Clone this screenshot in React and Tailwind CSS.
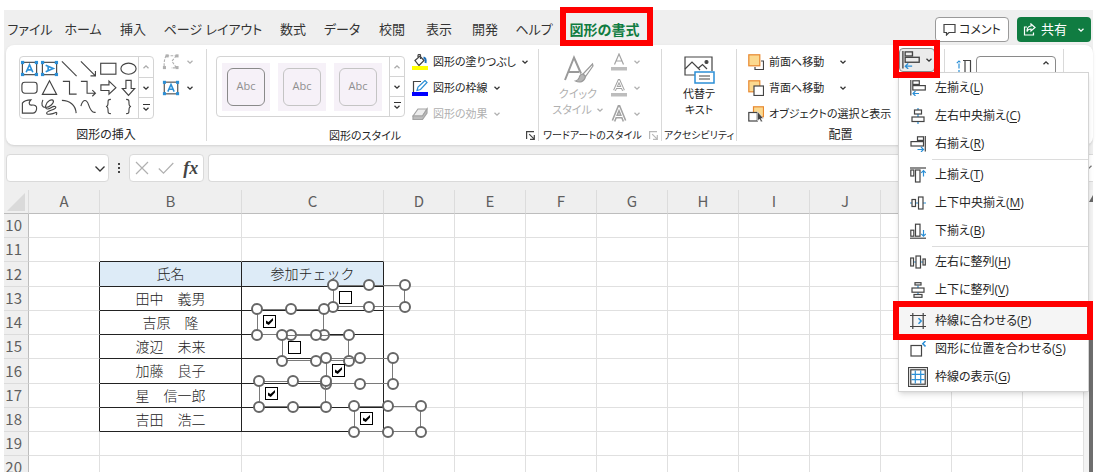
import { useState } from "react";

const FONT =
  "font-['Open_Sans','Noto_Sans_CJK_JP',sans-serif] [font-feature-settings:'palt']";
const SHEET_FONT = "font-['Noto_Sans_CJK_JP',sans-serif] [font-feature-settings:normal]";

const TABS = [
  { label: "ファイル", width: "w-[52px]" },
  { label: "ホーム", width: "w-[54px]" },
  { label: "挿入", width: "w-[46px]" },
  { label: "ページ レイアウト", width: "w-[114px]" },
  { label: "数式", width: "w-[46px]" },
  { label: "データ", width: "w-[52px]" },
  { label: "校閲", width: "w-[48px]" },
  { label: "表示", width: "w-[46px]" },
  { label: "開発", width: "w-[46px]" },
  { label: "ヘルプ", width: "w-[52px]" },
];

// columns past J sit under the open menu and carry no letter
const COLUMNS = ["A", "B", "C", "D", "E", "F", "G", "H", "I", "J", "", "", ""];

const ROWS = [
  { n: 10 },
  { n: 11 },
  { n: 12, name: "氏名", check: "参加チェック", head: true },
  { n: 13, name: "田中　義男" },
  { n: 14, name: "吉原　隆" },
  { n: 15, name: "渡辺　未来" },
  { n: 16, name: "加藤　良子" },
  { n: 17, name: "星　信一郎" },
  { n: 18, name: "吉田　浩二" },
  { n: 19 },
  { n: 20 },
];

// form controls float over the cells, positions are relative to the sheet
const CONTROLS = [
  { id: "tanaka", label: "田中 義男", place: "left-[329px] top-[95px] w-[72px] h-[22px]", checked: false },
  { id: "yoshihara", label: "吉原 隆", place: "left-[253px] top-[119px] w-[67px] h-[26px]", checked: true },
  { id: "watanabe", label: "渡辺 未来", place: "left-[278px] top-[145px] w-[67px] h-[26px]", checked: false },
  { id: "kato", label: "加藤 良子", place: "left-[322px] top-[168px] w-[67px] h-[26px]", checked: true },
  { id: "hoshi", label: "星 信一郎", place: "left-[255px] top-[191px] w-[67px] h-[26px]", checked: true },
  { id: "yoshida", label: "吉田 浩二", place: "left-[350px] top-[216px] w-[67px] h-[26px]", checked: true },
];

const HANDLES = [
  "-left-[7px] -top-[7px]",
  "left-1/2 -ml-[6px] -top-[7px]",
  "-right-[7px] -top-[7px]",
  "-left-[7px] -bottom-[7px]",
  "left-1/2 -ml-[6px] -bottom-[7px]",
  "-right-[7px] -bottom-[7px]",
];

const INK = "#444444";
const BLUE = "#2b8fd6";

function Icon({ children, className = "w-4 h-4", box = "0 0 16 16", stroke = INK }) {
  return (
    <svg
      viewBox={box}
      className={`${className} flex-shrink-0`}
      fill="none"
      stroke={stroke}
      strokeWidth="1.2"
      aria-hidden="true"
    >
      {children}
    </svg>
  );
}

function Chevron({ className = "text-[#333]", up = false }) {
  return (
    <svg viewBox="0 0 8 8" className={`w-2 h-2 flex-shrink-0 ${className}`} fill="none" stroke="currentColor" strokeWidth="1.3" aria-hidden="true">
      <path d={up ? "M1.5 5.2 4 2.8l2.5 2.4" : "M1.5 2.8 4 5.2l2.5-2.4"} />
    </svg>
  );
}

function TextBoxGlyph({ turned = false }) {
  return (
    <g>
      <rect x="2.5" y="3.5" width="15" height="13" stroke={INK} />
      <g fill={BLUE} stroke="none">
        <rect x="1" y="2" width="3.4" height="3.4" />
        <rect x="15.6" y="2" width="3.4" height="3.4" />
        <rect x="1" y="14.6" width="3.4" height="3.4" />
        <rect x="15.6" y="14.6" width="3.4" height="3.4" />
      </g>
      <path
        d="M6.5 14 10 6l3.5 8M7.8 11.4h4.4"
        stroke={BLUE}
        strokeWidth="1.7"
        transform={turned ? "rotate(90 10 10)" : undefined}
      />
    </g>
  );
}

const SHAPES = [
  { name: "テキスト ボックス", art: <TextBoxGlyph /> },
  { name: "縦書きテキスト ボックス", art: <TextBoxGlyph turned /> },
  { name: "直線", art: <path d="M2 2.5 17.5 18" /> },
  { name: "矢印", art: <path d="M2 2.5 17 17.5M17.3 12.5v5.2h-5.2" /> },
  { name: "正方形", art: <rect x="1.8" y="4.5" width="16" height="11.5" /> },
  { name: "楕円", art: <ellipse cx="10" cy="10.2" rx="8" ry="5.8" /> },
  { name: "角丸四角形", art: <rect x="2" y="4.5" width="16" height="11.5" rx="3" /> },
  { name: "三角形", art: <path d="M10 3 17.5 17.3h-15z" /> },
  { name: "コネクタ", art: <path d="M3 3.5h7v13.5h7.5" /> },
  { name: "矢印コネクタ", art: <path d="M2 3.5h6.5V16H17M14 12.8l3.3 3.2-3.3 3.2" /> },
  { name: "右矢印", art: <path d="M2 7.3h8.500V3.300L17.800 10.200 10.500 17v-3.800H2z" /> },
  { name: "下矢印", art: <path d="M7.300 2.500h5.500v8.500h3.700L10 18.300 3.500 11h3.800z" /> },
  { name: "フリーフォーム", art: <path d="M2.500 6.500c2-3 5-3.500 9-3.500-3 3-2 6 1 5.500s5.500 1 5 4-2 4.500-4 4.500h-11z" /> },
  { name: "フリーハンド", art: <path d="M3 3c-2 5-1 8 3 8S15 6.500 14 4 7 4 6 9s3 4 6 2 6-1 4 1-9 2.500-9 5 7 .5 9-.5 2 1 1 2.500" /> },
  { name: "円弧", art: <path d="M2 3.500c8 0 14.500 5 15 13.500" /> },
  { name: "曲線", art: <path d="M2 9.500C4 2 8 2 10 8s4 9 7.500 8" /> },
  { name: "左中かっこ", art: <path d="M12.500 2.500c-3 0-3 1-3 3.500s0 4-2.200 4c2.200 0 2.200 1.500 2.200 4s0 3.500 3 3.500" /> },
  { name: "右中かっこ", art: <path d="M7.500 2.500c3 0 3 1 3 3.500s0 4 2.200 4c-2.200 0-2.200 1.500-2.200 4s0 3.500-3 3.500" /> },
];

function AlignLeftIcon({ className }) {
  return (
    <Icon className={className}>
      <path d="M.8 0v15.500" />
      <rect x="2.800" y=".8" width="6.500" height="3.600" />
      <rect x="2.800" y="5.600" width="12.500" height="4.400" />
      <path d="M9 13.500H3M5.500 11 3 13.500 5.500 16" stroke={BLUE} />
    </Icon>
  );
}

const MENU = [
  [
    { text: "左揃え", hot: "L", icon: <AlignLeftIcon /> },
    {
      text: "左右中央揃え",
      hot: "C",
      icon: (
        <Icon>
          <path d="M8 0v2M8 6v3M8 14v2" stroke={BLUE} />
          <rect x="4.500" y="2" width="7" height="4" />
          <rect x="2" y="9" width="12" height="4.500" />
        </Icon>
      ),
    },
    {
      text: "右揃え",
      hot: "R",
      icon: (
        <Icon>
          <path d="M15.300 0v15.500" />
          <rect x="7.500" y=".8" width="6" height="3.600" />
          <rect x="1" y="5.600" width="12.500" height="4.400" />
          <path d="M7.500 13.500h6M11 11l2.500 2.500L11 16" stroke={BLUE} />
        </Icon>
      ),
    },
  ],
  [
    {
      text: "上揃え",
      hot: "T",
      icon: (
        <Icon>
          <path d="M0 1h16" />
          <rect x=".8" y="3" width="3" height="6" />
          <rect x="5.500" y="3" width="4.500" height="12" />
          <path d="M13.500 9.500V3.500M11.200 5.800l2.300-2.300 2.300 2.300" stroke={BLUE} />
        </Icon>
      ),
    },
    {
      text: "上下中央揃え",
      hot: "M",
      icon: (
        <Icon>
          <path d="M0 8h2M5.500 8h3M13 8h3" stroke={BLUE} />
          <rect x="2" y="4.500" width="3.500" height="7" />
          <rect x="8.500" y="2" width="4.500" height="12" />
        </Icon>
      ),
    },
    {
      text: "下揃え",
      hot: "B",
      icon: (
        <Icon>
          <path d="M0 15.200h16" />
          <rect x=".8" y="7.200" width="3" height="6" />
          <rect x="5.500" y="1.200" width="4.500" height="12" />
          <path d="M13.500 7v6M11.200 10.800l2.300 2.300 2.300-2.300" stroke={BLUE} />
        </Icon>
      ),
    },
  ],
  [
    {
      text: "左右に整列",
      hot: "H",
      icon: (
        <Icon>
          <path d="M3.500 8h2.500M10.500 8H13" stroke={BLUE} />
          <rect x=".7" y="4" width="2.800" height="8" />
          <rect x="6" y="2" width="4.500" height="12" />
          <rect x="13" y="5" width="2.300" height="6" />
        </Icon>
      ),
    },
    {
      text: "上下に整列",
      hot: "V",
      icon: (
        <Icon>
          <path d="M8 3.500v2.500M8 10.500V12" stroke={BLUE} />
          <rect x="5" y=".7" width="6" height="2.300" />
          <rect x="2" y="6" width="12" height="4.200" />
          <rect x="4" y="12.500" width="8" height="2.800" />
        </Icon>
      ),
    },
  ],
  [
    {
      text: "枠線に合わせる",
      hot: "P",
      active: true,
      icon: (
        <Icon>
          <path d="M0 2.500h16M0 13.500h16M2.800 0v16M13.200 0v16" />
          <path d="M8.500 5.200 11.200 8l-2.700 2.800" stroke={BLUE} strokeWidth="1.500" />
        </Icon>
      ),
    },
    {
      text: "図形に位置を合わせる",
      hot: "S",
      icon: (
        <Icon>
          <rect x="1" y="4.500" width="10.500" height="10.500" />
          <path d="M15.500 0 12.800 2.700l2.700 2.700" stroke={BLUE} strokeWidth="1.500" />
        </Icon>
      ),
    },
    {
      text: "枠線の表示",
      hot: "G",
      pressed: true,
      icon: (
        <Icon>
          <rect x=".8" y=".8" width="14.400" height="14.400" fill="#fff" />
          <path d="M5.300 1.500v13M10.700 1.500v13M1.500 5.300h13M1.500 10.700h13" stroke={BLUE} />
        </Icon>
      ),
    },
  ],
];

function AlignMenu() {
  return (
    <div
      role="menu"
      className="absolute -left-px top-full z-20 w-[191px] pt-px bg-white border border-[#d4d4d4] shadow-md text-xs text-[#262626]"
    >
      {MENU.map((group, i) => (
        <div key={i}>
          {i > 0 && <div className="ml-[33px] h-[3px] py-px bg-[#dcdcdc] bg-clip-content" />}
          {group.map((item) => (
            <button
              key={item.hot}
              role="menuitem"
              className={`relative flex h-7 w-full items-center pl-[9px] whitespace-nowrap ${item.active ? "bg-[#f5f5f5]" : ""}`}
            >
              <span
                className={`flex w-5 h-5 mr-[7px] items-center justify-center border ${item.pressed ? "border-[#444] bg-[#e0e0e0]" : "border-transparent"}`}
              >
                {item.icon}
              </span>
              <span>
                {item.text}(<u className="underline-offset-2">{item.hot}</u>)
              </span>
              {item.active && (
                <span className="absolute -left-[6px] -right-[5px] -top-[6px] -bottom-[5px] border-6 border-[#ff0000] pointer-events-none" />
              )}
            </button>
          ))}
        </div>
      ))}
    </div>
  );
}

function GalleryScroll() {
  return (
    <div className="flex flex-col w-[15px] border-l border-[#d4d4d4] divide-y divide-[#d4d4d4]">
      <button aria-label="上へ" className="flex-1 flex items-center justify-center">
        <Chevron up className="text-[#aaa]" />
      </button>
      <button aria-label="下へ" className="flex-1 flex items-center justify-center">
        <Chevron />
      </button>
      <button aria-label="その他" className="flex-1 flex flex-col items-center justify-center">
        <span className="w-[7px] h-px bg-[#333]" />
        <Chevron />
      </button>
    </div>
  );
}

function RibbonGroup({ label, width, launcher, launcherTone = "#444", labelSize = "text-xs", children }) {
  return (
    <section className={`${width} flex flex-col flex-shrink-0 py-1`}>
      <div className="flex-1 flex border-r border-[#d9d9d9] flex-col">
        <div className="h-[76px] flex">{children}</div>
        <div className="flex flex-1 items-center pt-1">
          <h2 className={`flex-1 text-center leading-none whitespace-nowrap ${labelSize}`}>{label}</h2>
          {launcher && (
            <button aria-label={`${label}の設定`} className="w-[15px] flex justify-center">
              <Icon className="w-[9px] h-[9px]" box="0 0 9 9" stroke={launcherTone}>
                <path d="M.6 8V.6H8M3.200 3.200l5 5M8.300 4v4.300H4" />
              </Icon>
            </button>
          )}
        </div>
      </div>
    </section>
  );
}

function RibbonItem({ icon, text, muted, chevron = true, gap = "" }) {
  return (
    <button
      className={`flex h-[26px] items-center gap-[5px] text-[11px] whitespace-nowrap ${muted ? "text-[#b0b0b0]" : "text-[#262626]"}`}
    >
      {icon}
      {text && <span className={gap}>{text}</span>}
      {chevron && <Chevron className={muted ? "text-[#b0b0b0]" : "text-[#333]"} />}
    </button>
  );
}

function LetterIcon({ outlined, bar = true }) {
  const shape = bar ? "M4.500 11.500 9 1.500l4.500 10M6 8.500h6" : "M3.500 16 9 2.500 14.500 16M5.500 11.500h7";
  return (
    <Icon className="w-[18px] h-[18px]" box="0 0 18 18" stroke="#a3a3a3">
      {outlined ? (
        <g>
          <path d={shape} strokeWidth={bar ? "3" : "4"} />
          <path d={shape} stroke="#ffffff" strokeWidth="1" />
        </g>
      ) : (
        <path d="M4.500 11.500 9 1l4.500 10.500M6 8h6" />
      )}
      {bar && <rect x="1" y="14" width="16" height="3.500" fill="#bdbdbd" stroke="none" />}
    </Icon>
  );
}

function Ribbon() {
  return (
    <div className="ml-0.5 flex h-[100px] rounded-lg bg-white shadow text-[#262626]">
      <RibbonGroup label="図形の挿入" width="w-[201px]">
        <div className="ml-[13px] mt-[7px] h-[63px] flex rounded border border-[#d4d4d4]">
          <div className="w-[118px] grid grid-cols-6 grid-rows-3 py-0.5">
            {SHAPES.map((s) => (
              <button key={s.name} aria-label={s.name} className="flex items-center justify-center">
                <Icon className="w-[19px] h-[19px]" box="0 0 20 20">
                  {s.art}
                </Icon>
              </button>
            ))}
          </div>
          <GalleryScroll />
        </div>
        <div className="ml-[8px]">
          <button aria-label="図形の編集" className="flex h-[26px] items-center gap-[6px]">
            <Icon className="w-[18px] h-[18px]" box="0 0 20 20" stroke="#b0b0b0">
              <path d="M5 3h11M16 3l-5 6 5 7.500H10M4.500 3C3 6 2 10 2.500 16" strokeDasharray="3 1.500" />
              <g fill="#b0b0b0" stroke="none">
                <rect x="4" y="1.500" width="3.400" height="3.400" />
                <rect x="15" y="1.500" width="3.400" height="3.400" />
                <rect x="1" y="14.500" width="3.400" height="3.400" />
                <rect x="15" y="14.500" width="3.400" height="3.400" />
              </g>
            </Icon>
            <Chevron className="text-[#b0b0b0]" />
          </button>
          <button aria-label="テキスト ボックス" className="flex h-[26px] items-center gap-[6px]">
            <Icon className="w-[18px] h-[18px]" box="0 0 20 20">
              <TextBoxGlyph />
            </Icon>
            <Chevron />
          </button>
        </div>
      </RibbonGroup>

      <RibbonGroup label="図形のスタイル" width="w-[332px]" labelSize="text-[11px]" launcher>
        <div className="ml-[9px] mt-[7px] h-[61px] flex rounded border border-[#d4d4d4]">
          <div className="flex w-[172px] items-center gap-2 pl-[5px]">
            {["border-[#8a8a8a]", "border-[#c4c4c4]", "border-[#c4c4c4]"].map((tone, i) => (
              <button key={i} className="w-12 h-12 bg-[#f6f1f8] p-[5px]">
                <span className={`flex w-full h-full items-center justify-center rounded-md border text-[11px] text-[#8f8f8f] ${tone}`}>
                  Abc
                </span>
              </button>
            ))}
          </div>
          <GalleryScroll />
        </div>
        <div className="ml-[7px]">
          <RibbonItem
            text="図形の塗りつぶし"
            icon={
              <Icon>
                <path d="M3 6.500 8 2l4 4.500-5 5zM6 4.500V1.500c0-1.500 2.500-1.500 2.500 0V5" />
                <path d="M11.500 3.500c2 .5 2.500 2.500 2 5.500" stroke="#1e6fb8" strokeWidth="2" />
                <rect x="0" y="12" width="16" height="4" fill="#ffff00" stroke="none" />
              </Icon>
            }
          />
          <RibbonItem
            text="図形の枠線"
            icon={
              <Icon>
                <path d="M9 1.500H1.500V12" />
                <path d="M5 10.500 6 7l7-6.500 2 2L8.500 9.500z" stroke={BLUE} />
                <rect x="0" y="12" width="16" height="4" fill="#0000ff" stroke="none" />
              </Icon>
            }
          />
          <RibbonItem
            muted
            text="図形の効果"
            icon={
              <Icon stroke="#a3a3a3">
                <path d="M1 10 6 3h9l-4.500 7z" fill="#ededed" />
                <path d="M1 10h9.500L15 3v4l-4.500 6.500H1z" fill="#bdbdbd" />
              </Icon>
            }
          />
        </div>
      </RibbonGroup>

      <RibbonGroup label="ワードアートのスタイル" width="w-[123px]" labelSize="text-[10px]" launcher launcherTone="#b8b8b8">
        <button className="ml-[10px] w-[58px] pt-[5px] flex flex-col items-center text-[11px] leading-4 text-[#b0b0b0]">
          <Icon className="w-8 h-8" box="0 0 32 32" stroke="#9a9a9a">
            <path d="M3 26 12 3.500l7 16M6.500 18h10.500" strokeWidth="2" />
            <path d="M30.500 10 21 20l2.500 2.500L31 12z" fill="#fff" />
            <path d="M21 20c-3 0-3.500 2-4 4-.5 1.500-1.500 2.500-3.500 3 4 2 9 1 10-4.500z" fill="#b5b5b5" />
          </Icon>
          <span>クイック</span>
          <span className="flex items-center gap-1 whitespace-nowrap">
            スタイル <Chevron className="text-[#b0b0b0]" />
          </span>
        </button>
        <div className="ml-[3px]">
          <RibbonItem muted icon={<LetterIcon />} />
          <RibbonItem muted icon={<LetterIcon outlined />} />
          <RibbonItem muted icon={<LetterIcon outlined bar={false} />} />
        </div>
      </RibbonGroup>

      <RibbonGroup label="アクセシビリティ" width="w-[75px]" labelSize="text-[10px]">
        <button className="mx-auto w-12 pt-[5px] flex flex-col items-center text-[11px] leading-4">
          <Icon className="w-8 h-8" box="0 0 32 32">
            <path d="M12 21H2V3h27v14" />
            <path d="m2 15 7-7 8 8M15.500 14l4-3.500 4.500 4.500" />
            <circle cx="23.500" cy="8" r="1.500" fill={INK} />
            <rect x="12" y="18" width="19" height="11" fill="#fff" stroke={BLUE} strokeWidth="1.500" />
            <path d="M16 22h11M16 25h11" />
          </Icon>
          <span>代替テ</span>
          <span>キスト</span>
        </button>
      </RibbonGroup>

      <RibbonGroup label="配置" width="w-[208px]">
        <div className="ml-[11px] flex-1">
          <RibbonItem
            text="前面へ移動"
            gap="mr-[10px]"
            icon={
              <Icon>
                <path d="M13 7h2.500v8.500H7V13" />
                <rect x=".8" y=".8" width="11" height="11" fill="#fbd98f" stroke="#e8882e" />
              </Icon>
            }
          />
          <RibbonItem
            text="背面へ移動"
            gap="mr-[10px]"
            icon={
              <Icon>
                <rect x=".8" y=".8" width="11" height="11" fill="#fbd98f" stroke="#e8882e" />
                <rect x="6" y="6" width="9.500" height="9.500" fill="#fff" />
              </Icon>
            }
          />
          <RibbonItem
            text="オブジェクトの選択と表示"
            chevron={false}
            icon={
              <Icon>
                <rect x="5.500" y=".8" width="10" height="10" fill="#fbd98f" stroke="#e8882e" />
                <rect x=".8" y="6.500" width="8.500" height="8.500" fill="#fff" />
                <path d="M9.500 5.500v9.500l2-2 1.500 3 1.500-.8-1.500-2.700h2.500z" fill={INK} stroke="#fff" strokeWidth=".5" />
              </Icon>
            }
          />
        </div>
        <div className="relative mr-[9px] -mt-px h-[24px]">
          <button
            aria-label="配置"
            aria-expanded="true"
            className="flex w-9 h-full items-center gap-[5px] pl-0.5 bg-[#ebebeb] border border-[#8a8a8a] rounded-sm"
          >
            <AlignLeftIcon className="w-[18px] h-[18px]" />
            <Chevron />
          </button>
          <AlignMenu />
          <span className="absolute -left-[6px] -right-[5px] -top-[8px] -bottom-[6px] z-30 border-6 border-[#ff0000] pointer-events-none" />
        </div>
      </RibbonGroup>

      <RibbonGroup label="" width="w-[119px]">
        <label htmlFor="shape-height" className="ml-[11px] mt-[10px]">
          <Icon className="w-[18px] h-[18px]" box="0 0 18 18">
            <path d="M3 16V2M.8 4.200 3 2l2.200 2.200" stroke={BLUE} strokeDasharray="5 1.500" />
            <path d="M7 1.500h8M9 1.500V18M14.500 1.500V18" />
          </Icon>
        </label>
        <div className="relative ml-[2px] mt-[7px] h-6">
          <input id="shape-height" aria-label="図形の高さ" className="w-20 h-6 px-2 rounded border border-[#8a8a8a]" />
          <span className="absolute right-[6px] top-[3px]">
            <Chevron up />
          </span>
        </div>
      </RibbonGroup>
    </div>
  );
}

function CheckControl({ control }) {
  const [checked, setChecked] = useState(control.checked);
  return (
    <div className={`absolute border border-[#7a7a7a] ${control.place}`}>
      <input
        type="checkbox"
        id={control.id}
        aria-label={control.label}
        checked={checked}
        onChange={(e) => setChecked(e.target.checked)}
        className="absolute left-[5px] top-[5px] w-[13px] h-[13px] appearance-none bg-white border border-black"
      />
      {checked && (
        <svg viewBox="0 0 13 13" className="absolute left-[5px] top-[5px] w-[13px] h-[13px] pointer-events-none" aria-hidden="true">
          <path d="M3 5.500 5.500 7 10 3v2.500L5.800 10 3 8.500z" fill="#000" />
        </svg>
      )}
      {HANDLES.map((pos) => (
        <span key={pos} className={`absolute w-[12px] h-[12px] rounded-full bg-white border-2 border-[#666] ${pos}`} />
      ))}
    </div>
  );
}

function Sheet() {
  const inTable = (col) => col === "B" || col === "C";

  const cellClass = (row, col) => {
    const bottom = inTable(col) && row.n >= 11 && row.n <= 18;
    const right = (col === "A" || inTable(col)) && row.n >= 12 && row.n <= 18;
    return [
      "border-r border-b p-0 pb-0.5 text-center text-sm leading-none whitespace-nowrap font-light",
      bottom ? "border-b-[#222]" : "border-b-[#e0e0e0]",
      right ? "border-r-[#222]" : "border-r-[#e0e0e0]",
      row.head && inTable(col) ? "bg-[#ddebf7]" : "bg-white",
    ].join(" ");
  };

  return (
    <div className="flex flex-1 min-h-0">
      <div className={`relative flex-1 overflow-hidden text-[#222] ${SHEET_FONT}`}>
        <table className="w-full table-fixed border-separate border-spacing-0">
          <colgroup>
            <col className="w-[25px]" />
            <col className="w-[71px]" />
            <col className="w-[142px]" />
            <col className="w-[142px]" />
            {COLUMNS.slice(3, -1).map((c, i) => (
              <col key={i} className="w-[71px]" />
            ))}
            <col />
          </colgroup>
          <thead>
            <tr className="h-6">
              <th className="p-0 border-b border-r border-[#bdbdbd] border-r-[#dcdcdc]">
                <svg viewBox="0 0 18 18" className="ml-[3px] w-[18px] h-[18px]" aria-hidden="true">
                  <path d="M18 0v18H0z" fill="#dadada" />
                </svg>
              </th>
              {COLUMNS.map((c, i) => (
                <th
                  key={i}
                  className="p-0 pb-0.5 border-b border-r border-b-[#bdbdbd] border-r-[#dcdcdc] text-[15px] leading-none font-normal text-[#5f5f5f]"
                >
                  {c}
                </th>
              ))}
            </tr>
          </thead>
          <tbody>
            {ROWS.map((row) => (
              <tr key={row.n} className={row.n === 12 || row.n === 16 ? "h-[25px]" : "h-6"}>
                <th className="p-0 pb-0.5 pr-[6px] text-right border-b border-r border-b-[#dcdcdc] border-r-[#bdbdbd] text-[15px] leading-none font-normal text-[#5f5f5f]">
                  {row.n}
                </th>
                {COLUMNS.map((c, i) => (
                  <td key={i} className={cellClass(row, c)}>
                    {c === "B" && row.name}
                    {c === "C" && row.check}
                  </td>
                ))}
              </tr>
            ))}
          </tbody>
        </table>
        {CONTROLS.map((control) => (
          <CheckControl key={control.id} control={control} />
        ))}
      </div>
      <div className="w-[9px] bg-[#f3f3f3] flex flex-col items-end">
        <svg viewBox="0 0 4 7" className="mt-[5px] w-1 h-[7px]" aria-hidden="true">
          <path d="M4 0v7H0z" fill="#666" />
        </svg>
        <div className="mt-[111px] w-1 flex-1 bg-[#6e6e6e]" />
      </div>
    </div>
  );
}

export default function App() {
  return (
    <div className={`h-screen overflow-hidden bg-white pt-[10px] pb-[3px] pl-1 pr-3 ${FONT}`}>
      <div className="flex h-full flex-col bg-[#efefef]">
        <header className="flex h-[35px] flex-shrink-0 items-center justify-between">
          <nav className="flex h-full items-center text-[13px] text-[#333]">
            {TABS.map((tab) => (
              <button key={tab.label} className={`${tab.width} h-full pt-1 text-center whitespace-nowrap`}>
                {tab.label}
              </button>
            ))}
            <button className="relative w-[93px] h-full pt-1 pr-1 text-sm font-bold text-[#107c41] whitespace-nowrap">
              図形の書式
              <span className="absolute left-0 right-0 -top-[3px] -bottom-px z-30 border-6 border-[#ff0000] pointer-events-none" />
            </button>
          </nav>
          <div className="flex items-center gap-2 pt-1 pr-[2px] text-[13px]">
            <button className="flex w-[74px] h-[25px] items-center justify-center gap-[3px] rounded border border-[#9a9a9a] bg-white text-xs text-[#262626] whitespace-nowrap">
              <Icon className="w-[13px] h-[13px]" box="0 0 13 13">
                <path d="M1 1.500h11v8H6l-2.500 2.500V9.500H1z" />
              </Icon>
              コメント
            </button>
            <button className="flex w-[74px] h-[25px] items-center justify-center gap-[5px] rounded bg-[#107c41] text-white whitespace-nowrap">
              <Icon className="w-[13px] h-[13px]" box="0 0 13 13" stroke="#fff">
                <path d="M4 4H1.500v8h9V9.500M8 1l4 3.500L8 8V6C5.500 6 4.500 7 4 8.500 4 5.500 5.500 3.200 8 3z" />
              </Icon>
              共有
              <span className="ml-[5px] flex">
                <Chevron className="text-white" />
              </span>
            </button>
          </div>
        </header>

        <Ribbon />

        <div className="flex flex-shrink-0 pt-[9px] pb-2 pl-0.5">
          <div className="relative w-[103px]">
            <input aria-label="名前ボックス" className="w-full h-7 px-2 rounded border border-[#dadada] bg-white text-xs" />
            <svg viewBox="0 0 12 12" className="absolute right-[3px] top-[9px] w-3 h-3" fill="none" stroke="#333" strokeWidth="1.300" aria-hidden="true">
              <path d="m1.500 3.500 4.500 4.500 4.500-4.500" />
            </svg>
          </div>
          <div className="flex w-[20px] flex-col items-center justify-center gap-0.5">
            <span className="w-0.5 h-0.5 bg-[#444]" />
            <span className="w-0.5 h-0.5 bg-[#444]" />
            <span className="w-0.5 h-0.5 bg-[#444]" />
          </div>
          <div className="flex w-[75px] h-7 items-center justify-around rounded border border-[#dadada] bg-white">
            <button aria-label="キャンセル">
              <Icon className="w-[14px] h-[14px]" box="0 0 14 14" stroke="#b0b0b0">
                <path d="m1 1 12 12M13 1 1 13" />
              </Icon>
            </button>
            <button aria-label="入力">
              <Icon className="w-[16px] h-[14px]" box="0 0 16 14" stroke="#b0b0b0">
                <path d="m.8 7.500 4.700 4.700L15.300 2" />
              </Icon>
            </button>
            <button className="font-['Liberation_Serif',serif] italic font-bold text-lg leading-none text-[#444]">fx</button>
          </div>
          <div className="relative ml-1 flex-1">
            <input aria-label="数式バー" className="w-full h-7 px-2 rounded-l border border-r-0 border-[#dadada] bg-white text-xs" />
            <span className="absolute right-0 top-[9px]">
              <Chevron className="text-[#777]" />
            </span>
          </div>
        </div>

        <Sheet />
      </div>
    </div>
  );
}
